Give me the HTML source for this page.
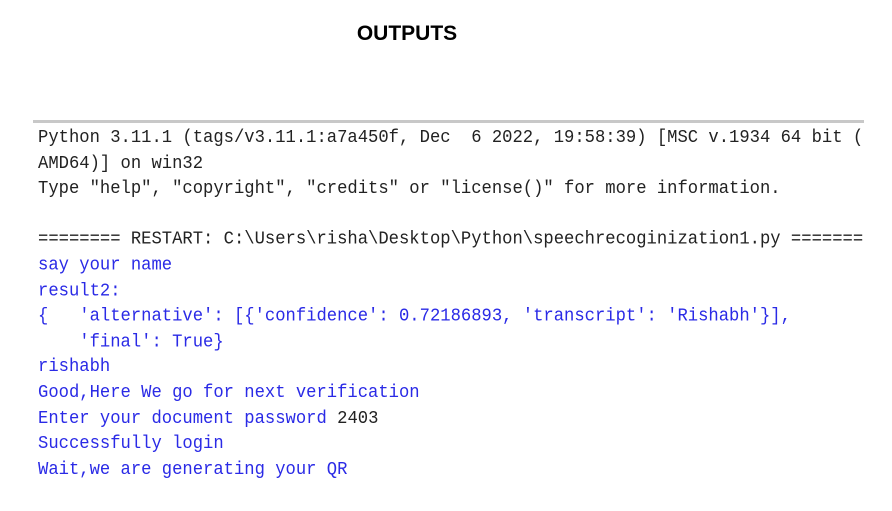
<!DOCTYPE html>
<html><head><meta charset="utf-8"><style>
body{margin:0;width:892px;height:511px;background:#fff;position:relative;overflow:hidden}
.t{position:absolute;left:0;width:814px;top:22px;text-align:center;font:bold 21px "Liberation Sans",sans-serif;color:#000}
.bar{position:absolute;left:33px;width:831px;top:120px;height:3px;background:#c8c8c8}
pre{position:absolute;left:38px;top:126px;margin:0;font:17.2px/23.6px "Liberation Mono",monospace;color:#222;transform:scaleY(1.08);transform-origin:0 0}
.b{color:#2a2ae6}
</style></head><body>
<div class="t">OUTPUTS</div>
<div class="bar"></div>
<pre>Python 3.11.1 (tags/v3.11.1:a7a450f, Dec  6 2022, 19:58:39) [MSC v.1934 64 bit (
AMD64)] on win32
Type "help", "copyright", "credits" or "license()" for more information.

======== RESTART: C:\Users\risha\Desktop\Python\speechrecoginization1.py =======
<span class="b">say your name
result2:
{   'alternative': [{'confidence': 0.72186893, 'transcript': 'Rishabh'}],
    'final': True}
rishabh
Good,Here We go for next verification
Enter your document password </span>2403
<span class="b">Successfully login
Wait,we are generating your QR</span></pre>
</body></html>
